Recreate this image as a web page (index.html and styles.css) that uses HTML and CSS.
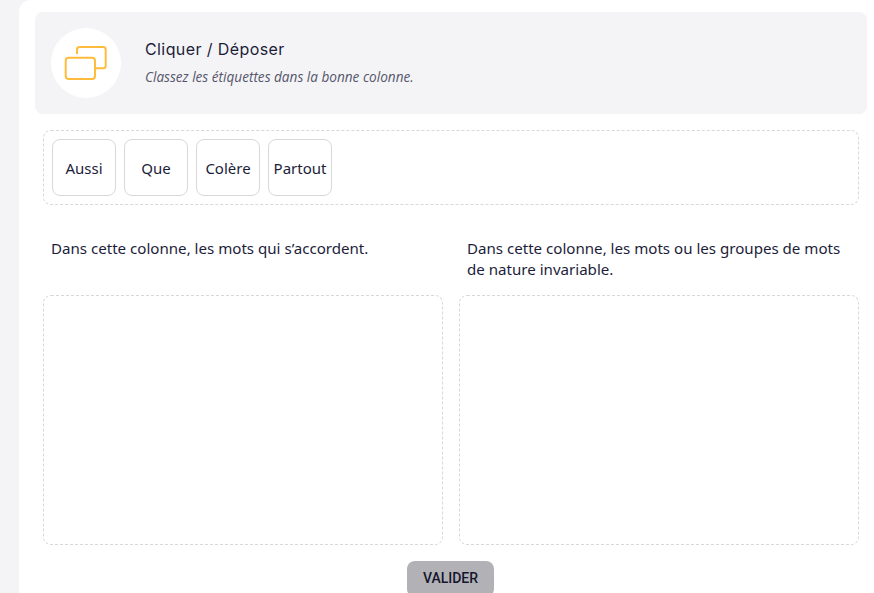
FILE: index.html
```html
<!DOCTYPE html>
<html lang="fr">
<head>
  <meta charset="UTF-8" />
  <meta name="viewport" content="width=device-width, initial-scale=1.0"/>
  <title>Cliquer / Déposer</title>
  <link rel="stylesheet" href="styles.css">
</head>
<body>

<main class="card">
  <header class="activity-header">
    <div class="activity-icon">
      <svg width="44" height="36" viewBox="0 0 44 36" fill="none" stroke="#ffbc3c" stroke-width="2">
        <path d="M13 9V4.500A2.500 2.500 0 0 1 15.500 2H39.200A2.500 2.500 0 0 1 41.700 4.500V20.800A2.500 2.500 0 0 1 39.200 23.300H32"/>
        <rect x="1.700" y="12.700" width="29.300" height="21.300" rx="3"/>
      </svg>
    </div>
    <div>
      <h1>Cliquer / Déposer</h1>
      <p>Classez les étiquettes dans la bonne colonne.</p>
    </div>
  </header>

  <section class="exercise">
    <div class="tag-zone">
      <div class="tag">Aussi</div>
      <div class="tag">Que</div>
      <div class="tag">Colère</div>
      <div class="tag">Partout</div>
    </div>

    <div class="columns">
      <div class="column">
        <p class="column-label">Dans cette colonne, les mots qui s’accordent.</p>
        <div class="drop-zone"></div>
      </div>
      <div class="column">
        <p class="column-label">Dans cette colonne, les mots ou les groupes de mots de nature invariable.</p>
        <div class="drop-zone"></div>
      </div>
    </div>

    <div class="actions">
      <button class="validate">VALIDER</button>
    </div>
  </section>
</main>

</body>
</html>
```

FILE: styles.css
```css
html, body {
  height: 593px;
  overflow: hidden;
}

body {
  margin: 0;
  font-family: 'Noto Sans', sans-serif;
  background-color: #f4f4f6;
  color: #1c1d3a;
}

.card {
  margin-left: 19px;
  height: 593px;
  box-sizing: border-box;
  padding: 12px 7px 0 16px;
  background: white;
  border-radius: 12px 0 0 0;
}

.activity-header {
  display: flex;
  align-items: center;
  gap: 24px;
  height: 102px;
  box-sizing: border-box;
  padding: 0 16px;
  background: #f4f4f6;
  border-radius: 8px;
}

.activity-icon {
  display: flex;
  align-items: center;
  justify-content: center;
  width: 70px;
  height: 70px;
  background: white;
  border-radius: 50%;
}

.activity-header h1 {
  margin: 0;
  font-family: 'Inter', sans-serif;
  font-size: 16px;
  font-weight: 400;
  letter-spacing: 0.4px;
  line-height: 20px;
}

.activity-header p {
  margin: 8px 0 0;
  font-family: 'Open Sans', sans-serif;
  font-style: italic;
  font-size: 13.600px;
  line-height: 20px;
  color: #55566b;
}

.exercise {
  padding: 16px 8px 0;
}

.tag-zone {
  display: flex;
  gap: 8px;
  height: 75px;
  box-sizing: border-box;
  padding: 8px;
  border: 1px dashed #d8d8dc;
  border-radius: 8px;
}

.tag {
  display: flex;
  align-items: center;
  justify-content: center;
  width: 64px;
  height: 57px;
  box-sizing: border-box;
  border: 1px solid #d8d8dc;
  border-radius: 8px;
  font-size: 15px;
}

.columns {
  display: grid;
  grid-template-columns: 1fr 1fr;
  gap: 16px;
  margin-top: 32px;
}

.column-label {
  height: 57px;
  margin: 0;
  padding: 1px 8px 0;
  font-size: 15.100px;
  line-height: 21px;
}

.drop-zone {
  height: 250px;
  box-sizing: border-box;
  border: 1px dashed #d8d8dc;
  border-radius: 8px;
}

.actions {
  display: flex;
  justify-content: center;
  margin-top: 16px;
}

.validate {
  width: 87px;
  height: 36px;
  margin-right: 1px;
  padding: 0 0 2px;
  border: none;
  border-radius: 8px;
  background: #b2b2b6;
  color: #14152e;
  font-family: 'Roboto', sans-serif;
  font-size: 14px;
  font-weight: 500;
}
```
